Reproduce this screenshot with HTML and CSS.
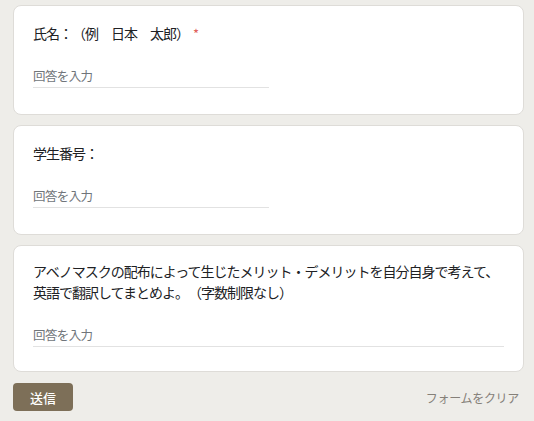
FILE: index.html
```html
<!DOCTYPE html>
<html lang="ja">
<head>
<meta charset="utf-8">
<link rel="stylesheet" href="styles.css">
</head>
<body>
<main class="form">
  <section class="card">
    <div class="title">氏名：（例　日本　太郎）<span class="req">*</span></div>
    <div class="field half"><span class="ph">回答を入力</span></div>
  </section>
  <section class="card">
    <div class="title">学生番号：</div>
    <div class="field half"><span class="ph">回答を入力</span></div>
  </section>
  <section class="card card-long">
    <div class="title"><span class="line">アベノマスクの配布によって生じたメリット・デメリットを自分自身で考えて、</span><br>英語で翻訳してまとめよ。（字数制限なし）</div>
    <div class="field full"><span class="ph">回答を入力</span></div>
  </section>
  <div class="actions">
    <button class="submit">送信</button>
    <span class="clear">フォームをクリア</span>
  </div>
</main>
</body>
</html>
```
FILE: styles.css
```css
html, body {
  margin: 0;
  padding: 0;
  background: #eeede9;
}
body {
  font-family: "Noto Sans CJK JP", "Noto Sans", sans-serif;
  color: #202124;
  text-spacing-trim: space-all;
}
.form {
  width: 511px;
  margin: 5px 0 0 13px;
  display: flex;
  flex-direction: column;
  gap: 10px;
}
.card {
  background: #fff;
  border: 1px solid #dedcd8;
  border-radius: 8px;
  padding: 17px 19px 26px;
}
.card-long {
  padding-top: 15px;
  padding-bottom: 24px;
}
.title {
  font-size: 14px;
  line-height: 21px;
  letter-spacing: -1px;
}
.line {
  white-space: nowrap;
}
.req {
  color: #e0605a;
  font-size: 13px;
  margin-left: 4px;
}
.field {
  margin-top: 22px;
  border-bottom: 1px solid #e2e2e2;
  padding-bottom: 1px;
}
.half { width: 50%; }
.full { width: 100%; }
.ph {
  display: block;
  font-size: 12.5px;
  line-height: 20px;
  color: #70757a;
  letter-spacing: -0.6px;
}
.actions {
  display: flex;
  justify-content: space-between;
  align-items: center;
  margin-top: 1px;
}
.submit {
  width: 60px;
  height: 28px;
  border: none;
  border-radius: 4px;
  background: #7d6f58;
  color: #fff;
  font-family: "Noto Sans CJK JP", sans-serif;
  font-size: 13px;
  font-weight: 500;
  padding: 0;
}
.clear {
  font-size: 12px;
  color: #858079;
  margin-right: 5px;
  letter-spacing: -0.3px;
}
```
